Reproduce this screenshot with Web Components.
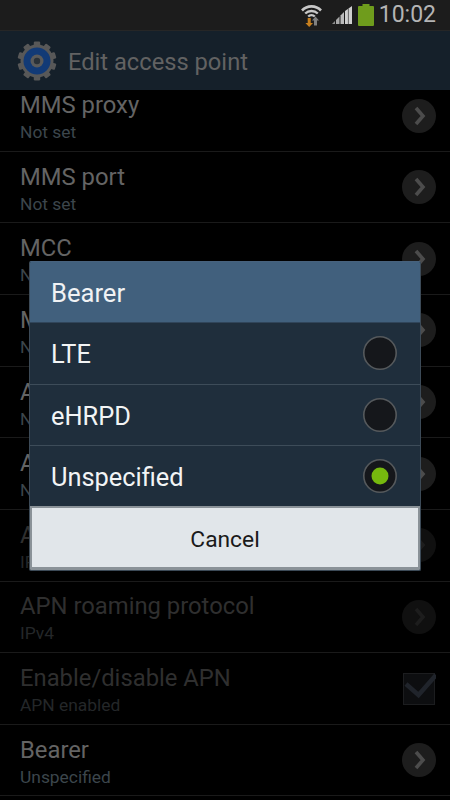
<!DOCTYPE html>
<html>
<head>
<meta charset="utf-8">
<title>Edit access point</title>
<style>
html, body { margin: 0; padding: 0; background: #000; }
body { width: 450px; height: 800px; overflow: hidden; position: relative; font-family: Roboto, "Liberation Sans", sans-serif; }
</style>
</head>
<body>
<status-bar></status-bar>
<action-bar>Edit access point</action-bar>
<apn-list>
    <apn-row title="MMS proxy" sub="Not set"></apn-row>
    <apn-row title="MMS port" sub="Not set"></apn-row>
    <apn-row title="MCC" sub="Not set"></apn-row>
    <apn-row title="MNC" sub="Not set"></apn-row>
    <apn-row title="APN type" sub="Not set"></apn-row>
    <apn-row title="APN protocol" sub="Not set"></apn-row>
    <apn-row title="APN protocol" sub="IPv4" disabled></apn-row>
    <apn-row title="APN roaming protocol" sub="IPv4" disabled></apn-row>
    <apn-row title="Enable/disable APN" sub="APN enabled" disabled check></apn-row>
    <apn-row title="Bearer" sub="Unspecified"></apn-row>
</apn-list>
<picker-dialog heading="Bearer" cancel="Cancel">
    <picker-option>LTE</picker-option>
    <picker-option>eHRPD</picker-option>
    <picker-option selected>Unspecified</picker-option>
</picker-dialog>

<script>
class StatusBar extends HTMLElement {
    constructor() {
        super();
        this.attachShadow({ mode: 'open' });
    }

    connectedCallback() {
        this.shadowRoot.innerHTML = `
            <style>
                :host {
                    display: flex;
                    justify-content: flex-end;
                    align-items: center;
                    height: 31px;
                    box-sizing: border-box;
                    padding-right: 14px;
                    background: #1c1c1c;
                    border-bottom: 1px solid #262626;
                }
                svg { display: block; }
                .wifi { margin-right: 10px; }
                .signal { margin-right: 6px; }
                .battery { margin-right: 5px; }
                span { font: 400 23px/30px Roboto, sans-serif; color: #b4b4b4; }
            </style>
            <svg class="wifi" width="21" height="24" viewBox="0 0 21 24">
                <g fill="none" stroke="#c8c8c8">
                    <path d="M1 7.5 A13 13 0 0 1 20 7.5" stroke-width="2.6"/>
                    <path d="M4.2 10.5 A9 9 0 0 1 16.8 10.5" stroke-width="2.4"/>
                    <path d="M7.2 13.5 A4.6 4.6 0 0 1 13.8 13.5" stroke-width="2.2"/>
                </g>
                <path d="M6.7 15h3v5h2.3l-3.8 4-3.8-4h2.3z" fill="#c8801e"/>
                <path d="M13 22.5v-5h-2l3.5-4 3.5 4h-2v5z" fill="#808080"/>
            </svg>
            <svg class="signal" width="20" height="18" viewBox="0 0 20 18">
                <path d="M0 18 L3 15 V18Z" fill="#8c8c8c"/>
                <path d="M4 14 L7.5 10.5 V18 H4Z" fill="#a8a8a8"/>
                <path d="M8.5 9.5 L12 6 V18 H8.5Z" fill="#bcbcbc"/>
                <path d="M13 5 L20 0 V18 H13Z" fill="#cfcfcf"/>
                <path d="M16.4 2.5v15.5" stroke="#3a3a3a" stroke-width=".7"/>
            </svg>
            <svg class="battery" width="16" height="22" viewBox="0 0 16 22">
                <path d="M4.5 0h7v2h3.5a1 1 0 0 1 1 1v18a1 1 0 0 1-1 1H1a1 1 0 0 1-1-1V3a1 1 0 0 1 1-1h3.5z" fill="#6f9c1c"/>
            </svg>
            <span>10:02</span>
        `;
    }
}
customElements.define('status-bar', StatusBar);

class ActionBar extends HTMLElement {
    constructor() {
        super();
        this.attachShadow({ mode: 'open' });
    }

    connectedCallback() {
        // gear teeth are drawn by rotating one rect around the centre
        let teeth = '';
        for (let i = 0; i < 10; i++) {
            teeth += `<rect x="16.8" y="0.5" width="6.4" height="7" rx="1.2" transform="rotate(${i * 36} 20 20)"/>`;
        }
        this.shadowRoot.innerHTML = `
            <style>
                :host {
                    display: flex;
                    align-items: center;
                    height: 59px;
                    box-sizing: border-box;
                    padding-left: 17px;
                    background: #15202a;
                }
                svg { display: block; margin-right: 11px; }
                span { font: 400 23.7px Roboto, sans-serif; color: #626262; padding-top: 2px; }
            </style>
            <svg width="40" height="40" viewBox="0 0 40 40">
                <g fill="#585858">${teeth}</g>
                <circle cx="20" cy="20" r="16.5" fill="#585858"/>
                <circle cx="20" cy="20" r="13.5" fill="#123a76"/>
                <circle cx="20" cy="20" r="6.5" fill="#5a5a5a"/>
                <circle cx="20" cy="20" r="3.2" fill="#2a3138"/>
            </svg>
            <span><slot></slot></span>
        `;
    }
}
customElements.define('action-bar', ActionBar);

class ApnList extends HTMLElement {
    constructor() {
        super();
        this.attachShadow({ mode: 'open' });
    }

    connectedCallback() {
        this.shadowRoot.innerHTML = `
            <style>
                :host { display: block; height: 710px; overflow: hidden; background: #000; }
                .scroll { margin-top: -9.8px; }
            </style>
            <div class="scroll"><slot></slot></div>
        `;
    }
}
customElements.define('apn-list', ApnList);

class ApnRow extends HTMLElement {
    constructor() {
        super();
        this.attachShadow({ mode: 'open' });
    }

    connectedCallback() {
        const disabled = this.hasAttribute('disabled');
        const control = this.hasAttribute('check')
            ? `<svg width="34" height="34" viewBox="0 0 34 34">
                   <rect x="1.5" y="1.5" width="31" height="31" fill="#0d0e10" stroke="#1c1d1f"/>
                   <path d="M4 12 L16.5 23 L34 3" fill="none" stroke="#20242b" stroke-width="4.5"/>
               </svg>`
            : `<svg width="34" height="34" viewBox="0 0 34 34">
                   <circle cx="17" cy="17" r="17" fill="${disabled ? '#101010' : '#1d1d1d'}"/>
                   <path d="M14 9 L21 17 L14 25" fill="none" stroke="${disabled ? '#1d1d1d' : '#4c4c4c'}" stroke-width="3.6"/>
               </svg>`;
        this.shadowRoot.innerHTML = `
            <style>
                :host {
                    display: flex;
                    align-items: center;
                    justify-content: space-between;
                    height: 71.625px;
                    box-sizing: border-box;
                    padding: 0 14px 0 20px;
                    border-bottom: 1px solid #1a1a1a;
                }
                .text { display: flex; flex-direction: column; padding-top: 7px; }
                .title { font: 400 23.8px/27px Roboto, sans-serif; color: ${disabled ? '#2f2f2f' : '#646464'}; }
                .sub { font: 400 17.4px/27px Roboto, sans-serif; color: ${disabled ? '#242729' : '#3c464c'}; }
                svg { display: block; flex: none; }
            </style>
            <div class="text">
                <div class="title">${this.getAttribute('title')}</div>
                <div class="sub">${this.getAttribute('sub')}</div>
            </div>
            ${control}
        `;
    }
}
customElements.define('apn-row', ApnRow);

class PickerDialog extends HTMLElement {
    constructor() {
        super();
        this.attachShadow({ mode: 'open' });
    }

    connectedCallback() {
        this.shadowRoot.innerHTML = `
            <style>
                :host {
                    position: absolute;
                    left: 29px;
                    top: 261px;
                    width: 392px;
                    height: 310px;
                    box-sizing: border-box;
                    display: flex;
                    flex-direction: column;
                    background: #1f2e3c;
                    border-radius: 2px;
                    border: 1px solid #3c4a57;
                    border-top-color: #47627d;
                    overflow: hidden;
                }
                .head {
                    height: 61px;
                    flex: none;
                    box-sizing: border-box;
                    padding: 2px 0 0 21px;
                    display: flex;
                    align-items: center;
                    background: #41607d;
                    border-bottom: 1px solid #30455a;
                    font: 400 25.6px Roboto, sans-serif;
                    color: #f0f2f4;
                }
                .foot {
                    flex: 1;
                    background: #8a9298;
                    padding: 2px 3px 4px 3px;
                    display: flex;
                    margin: 0 -1px -1px -1px;
                }
                button {
                    flex: 1;
                    border: 0;
                    padding: 3px 0 0 0;
                    background: #e1e6ea;
                    font: 400 22.8px Roboto, sans-serif;
                    color: #1a1a1a;
                }
            </style>
            <div class="head">${this.getAttribute('heading')}</div>
            <slot></slot>
            <div class="foot"><button>${this.getAttribute('cancel')}</button></div>
        `;
    }
}
customElements.define('picker-dialog', PickerDialog);

class PickerOption extends HTMLElement {
    constructor() {
        super();
        this.attachShadow({ mode: 'open' });
    }

    connectedCallback() {
        const dot = this.hasAttribute('selected') ? '<circle cx="18" cy="18" r="8.5" fill="#76b90e"/>' : '';
        this.shadowRoot.innerHTML = `
            <style>
                :host {
                    display: flex;
                    align-items: center;
                    justify-content: space-between;
                    height: 61.5px;
                    flex: none;
                    box-sizing: border-box;
                    padding: 0 22px 0 21px;
                    background: #1f2e3c;
                    border-bottom: 1px solid #3d4c59;
                    font: 400 25.4px Roboto, sans-serif;
                    color: #f2f4f5;
                }
                :host(:last-of-type) { border-bottom: 0; height: 60px; }
                span { padding-top: 2px; }
                svg { display: block; }
            </style>
            <span><slot></slot></span>
            <svg width="36" height="36" viewBox="0 0 36 36">
                <circle cx="18" cy="18" r="16.2" fill="#15171b" stroke="#55595c" stroke-width="1.6"/>
                ${dot}
            </svg>
        `;
    }
}
customElements.define('picker-option', PickerOption);
</script>
</body>
</html>
